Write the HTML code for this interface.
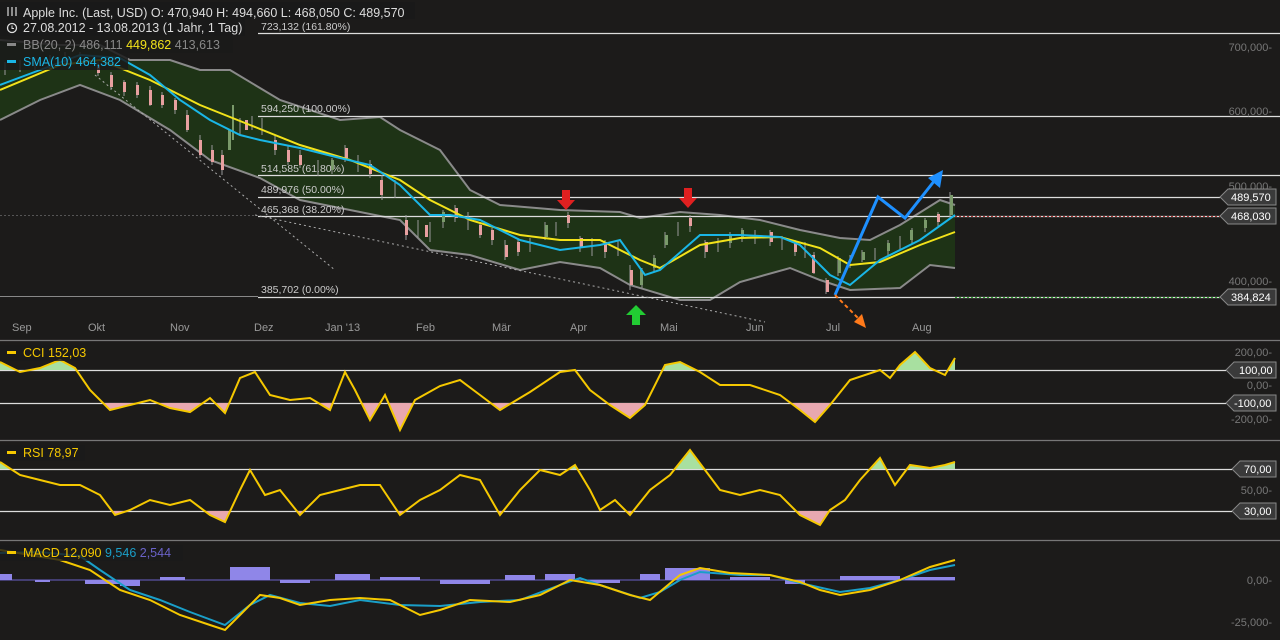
<!DOCTYPE html>
<html><head><meta charset="utf-8"><style>
html,body{margin:0;padding:0;background:#1c1b1a;width:1280px;height:640px;overflow:hidden}
svg{display:block;font-family:"Liberation Sans",sans-serif}
</style></head><body>
<svg width="1280" height="640" viewBox="0 0 1280 640">
<rect width="1280" height="640" fill="#1c1b1a"/>
<defs>
<clipPath id="cciU"><rect x="0" y="340" width="1280" height="30"/></clipPath>
<clipPath id="cciL"><rect x="0" y="403" width="1280" height="37"/></clipPath>
<clipPath id="rsiU"><rect x="0" y="440" width="1280" height="29"/></clipPath>
<clipPath id="rsiL"><rect x="0" y="511" width="1280" height="29"/></clipPath>
</defs>
<g stroke="#777" stroke-width="1.2"><line x1="0" y1="340.5" x2="1280" y2="340.5"/><line x1="0" y1="440.5" x2="1280" y2="440.5"/><line x1="0" y1="540.5" x2="1280" y2="540.5"/></g>
<polygon fill="#1e3316" points="0,40 60,45 100,45 130,60 170,60 200,70 230,70 280,100 340,120 380,117 400,130 440,150 470,190 500,205 560,210 620,212 640,218 680,212 720,215 760,220 800,230 840,238 870,240 900,225 940,200 955,205 955,268 930,265 900,288 850,290 820,280 790,268 740,282 710,300 680,300 630,285 600,268 560,262 520,270 470,255 430,250 400,220 350,210 300,200 260,178 210,160 170,130 120,100 80,85 40,100 0,120"/>
<g fill="none" stroke="#8a8a8a" stroke-width="2">
<polyline points="0,40 60,45 100,45 130,60 170,60 200,70 230,70 280,100 340,120 380,117 400,130 440,150 470,190 500,205 560,210 620,212 640,218 680,212 720,215 760,220 800,230 840,238 870,240 900,225 940,200 955,205"/>
<polyline points="0,120 40,100 80,85 120,100 170,130 210,160 260,178 300,200 350,210 400,220 430,250 470,255 520,270 560,262 600,268 630,285 680,300 710,300 740,282 790,268 820,280 850,290 900,288 930,265 955,268"/>
</g>
<g stroke="#ddd" stroke-width="1.2">
<line x1="258" y1="33.5" x2="1280" y2="33.5"/><line x1="258" y1="116.5" x2="1280" y2="116.5"/><line x1="258" y1="175.5" x2="1280" y2="175.5"/><line x1="258" y1="197.5" x2="1220" y2="197.5"/>
<line x1="258" y1="216.5" x2="1220" y2="216.5"/><line x1="258" y1="297.5" x2="1220" y2="297.5"/>
</g>
<line x1="0" y1="215.5" x2="258" y2="215.5" stroke="#555" stroke-dasharray="2,2"/>
<line x1="0" y1="296.5" x2="258" y2="296.5" stroke="#888"/>
<g font-size="10.5" fill="#ccc">
<text x="261" y="30">723,132 (161.80%)</text><text x="261" y="112">594,250 (100.00%)</text><text x="261" y="172">514,585 (61.80%)</text><text x="261" y="193">489,976 (50.00%)</text><text x="261" y="213">465,368 (38.20%)</text><text x="261" y="293">385,702 (0.00%)</text>
</g>
<g stroke="#aaa" stroke-dasharray="2,3" fill="none"><line x1="95" y1="75" x2="335" y2="270"/><line x1="255" y1="215" x2="765" y2="322"/></g>
<!-- candles -->
<g stroke="#999" stroke-width="1">
<path d="M5 62V75M20 60V72M35 58V70M50 55V68M65 52V66M80 52V64M98 62V76M111 72V90M124 80V96M137 82V98M150 86V106M162 92V108M175 98V114M187 110V132M200 135V158M212 145V165M222 150V175M240 118V136M252 116V130M262 118V135M275 135V155M288 145V165M300 150V168M318 160V176M332 158V174M345 145V162M358 155V172M370 160V178M382 175V200M395 180V198M406 215V240M418 220V238M430 222V242M443 210V228M455 205V222M468 212V230M480 222V238M492 228V245M505 240V260M518 238V256M530 238V252M545 222V240M556 222V236M568 212V228M580 236V252M592 238V256M605 240V258M618 240V256M630 265V290M642 268V288M654 255V272M665 232V248M678 222V236M690 215V232M705 240V258M718 238V252M730 232V248M742 228V242M755 230V244M770 230V246M782 236V250M795 240V256M805 242V258M814 252V274M826 278V294M838 256V276M850 255V268M862 250V262M875 248V260M888 240V255M900 236V250M912 228V244M925 218V232M938 212V226M950 192V218"/>
</g>
<g fill="#e8a0a0">
<rect x="97" y="65" width="3" height="8"/><rect x="110" y="75" width="3" height="12"/><rect x="123" y="82" width="3" height="10"/><rect x="136" y="85" width="3" height="10"/><rect x="149" y="90" width="3" height="15"/><rect x="161" y="95" width="3" height="10"/><rect x="174" y="100" width="3" height="10"/><rect x="186" y="115" width="3" height="15"/><rect x="199" y="140" width="3" height="15"/><rect x="211" y="150" width="3" height="12"/><rect x="221" y="155" width="3" height="15"/><rect x="245" y="120" width="3" height="10"/><rect x="274" y="140" width="3" height="10"/><rect x="287" y="150" width="3" height="12"/><rect x="299" y="155" width="3" height="10"/><rect x="345" y="148" width="3" height="10"/><rect x="369" y="164" width="3" height="10"/><rect x="380" y="180" width="3" height="15"/><rect x="405" y="220" width="3" height="15"/><rect x="425" y="225" width="3" height="12"/><rect x="455" y="208" width="3" height="10"/><rect x="479" y="225" width="3" height="10"/><rect x="491" y="230" width="3" height="10"/><rect x="505" y="245" width="3" height="12"/><rect x="517" y="242" width="3" height="10"/><rect x="567" y="215" width="3" height="8"/><rect x="580" y="238" width="3" height="10"/><rect x="604" y="242" width="3" height="10"/><rect x="630" y="270" width="3" height="15"/><rect x="689" y="218" width="3" height="8"/><rect x="705" y="242" width="3" height="10"/><rect x="770" y="232" width="3" height="10"/><rect x="794" y="242" width="3" height="10"/><rect x="812" y="255" width="3" height="18"/><rect x="826" y="280" width="3" height="12"/><rect x="937" y="214" width="3" height="8"/>
</g>
<g fill="#7a9a6a"><rect x="228" y="130" width="3" height="20"/><rect x="232" y="105" width="2" height="35"/><rect x="331" y="160" width="3" height="10"/><rect x="442" y="212" width="3" height="10"/><rect x="545" y="225" width="3" height="12"/><rect x="640" y="270" width="3" height="15"/><rect x="653" y="258" width="3" height="10"/><rect x="665" y="235" width="3" height="10"/><rect x="729" y="235" width="3" height="8"/><rect x="741" y="230" width="3" height="8"/><rect x="838" y="258" width="3" height="15"/><rect x="862" y="252" width="3" height="8"/><rect x="887" y="243" width="3" height="8"/><rect x="910" y="230" width="3" height="10"/><rect x="924" y="220" width="3" height="8"/><rect x="950" y="195" width="3" height="20"/></g>
<polyline fill="none" stroke="#f2e21a" stroke-width="2" points="0,90 60,65 100,60 150,80 200,105 250,125 300,145 350,160 400,180 430,200 470,220 520,235 560,240 600,240 640,260 660,268 700,245 740,238 780,237 820,248 850,265 880,262 920,245 955,232"/>
<polyline fill="none" stroke="#1ab6e6" stroke-width="2" points="0,85 40,70 80,55 120,58 150,75 180,100 210,120 240,135 260,140 300,148 340,158 370,165 400,185 430,215 450,215 480,220 520,240 560,250 600,245 620,240 645,275 660,270 700,235 740,235 780,237 800,245 830,275 850,285 880,260 920,240 955,215"/>
<polyline fill="none" stroke="#1e90ff" stroke-width="3" points="835,295 878,197 905,218 935,180"/>
<polygon fill="#1e90ff" points="943,170 928,178 940,188"/>
<line x1="835" y1="295" x2="860" y2="320" stroke="#ff7a1a" stroke-width="2" stroke-dasharray="4,3"/>
<polygon fill="#ff7a1a" points="866,328 854,322 862,314"/>
<g fill="#e02020"><polygon points="562,190 570,190 570,200 575,200 566,210 557,200 562,200"/><polygon points="684,188 692,188 692,198 697,198 688,208 679,198 684,198"/></g>
<polygon fill="#22cc33" points="636,305 646,315 640,315 640,325 632,325 632,315 626,315"/>
<g font-size="11" fill="#777" text-anchor="end">
<text x="1272" y="51">700,000-</text><text x="1272" y="115">600,000-</text><text x="1272" y="190">500,000-</text><text x="1272" y="285">400,000-</text>
<text x="1272" y="356">200,00-</text><text x="1272" y="389">0,00-</text><text x="1272" y="423">-200,00-</text>
<text x="1272" y="494">50,00-</text><text x="1272" y="584">0,00-</text><text x="1272" y="626">-25,000-</text>
</g>
<g font-size="11" fill="#fff">
<g fill="#3a3a3a" stroke="#888"><polygon points="1220,197 1228,189 1276,189 1276,205 1228,205"/><polygon points="1220,216 1228,208 1276,208 1276,224 1228,224"/><polygon points="1220,297 1228,289 1276,289 1276,305 1228,305"/>
<polygon points="1226,370 1234,362 1276,362 1276,378 1234,378"/><polygon points="1226,403 1234,395 1276,395 1276,411 1234,411"/><polygon points="1232,469 1240,461 1276,461 1276,477 1240,477"/><polygon points="1232,511 1240,503 1276,503 1276,519 1240,519"/></g>
<text x="1231" y="201">489,570</text><text x="1231" y="220">468,030</text><text x="1231" y="301">384,824</text><text x="1239" y="374">100,00</text><text x="1234" y="407">-100,00</text><text x="1244" y="473">70,00</text><text x="1244" y="515">30,00</text>
</g>
<line x1="955" y1="216.5" x2="1220" y2="216.5" stroke="#a33" stroke-dasharray="2,2"/>
<line x1="955" y1="297.5" x2="1220" y2="297.5" stroke="#3a3" stroke-dasharray="2,2"/>
<g font-size="11" fill="#999"><text x="12" y="331">Sep</text><text x="88" y="331">Okt</text><text x="170" y="331">Nov</text><text x="254" y="331">Dez</text><text x="325" y="331">Jan '13</text><text x="416" y="331">Feb</text><text x="492" y="331">Mär</text><text x="570" y="331">Apr</text><text x="660" y="331">Mai</text><text x="746" y="331">Jun</text><text x="826" y="331">Jul</text><text x="912" y="331">Aug</text></g>
<g stroke="#ddd" stroke-width="1.2"><line x1="0" y1="370.5" x2="1226" y2="370.5"/><line x1="0" y1="403.5" x2="1226" y2="403.5"/><line x1="0" y1="469.5" x2="1232" y2="469.5"/><line x1="0" y1="511.5" x2="1232" y2="511.5"/></g>
<polygon clip-path="url(#cciU)" fill="#a8e0a0" points="0,370 0,362 20,372 40,368 60,360 75,368 90,390 110,410 130,405 150,400 170,408 190,412 210,398 225,413 240,378 255,372 270,395 290,400 310,398 330,410 345,372 355,390 370,420 385,395 400,430 415,400 440,386 460,380 480,395 500,410 530,392 560,372 575,370 590,390 610,405 630,418 645,405 665,365 680,362 700,372 720,385 750,385 780,395 800,410 815,422 830,405 850,380 880,370 890,378 900,365 915,352 930,368 945,375 955,358 955,370"/>
<polygon clip-path="url(#cciL)" fill="#e8a8b0" points="0,403 0,362 20,372 40,368 60,360 75,368 90,390 110,410 130,405 150,400 170,408 190,412 210,398 225,413 240,378 255,372 270,395 290,400 310,398 330,410 345,372 355,390 370,420 385,395 400,430 415,400 440,386 460,380 480,395 500,410 530,392 560,372 575,370 590,390 610,405 630,418 645,405 665,365 680,362 700,372 720,385 750,385 780,395 800,410 815,422 830,405 850,380 880,370 890,378 900,365 915,352 930,368 945,375 955,358 955,403"/>
<polyline fill="none" stroke="#f5c800" stroke-width="2" points="0,362 20,372 40,368 60,360 75,368 90,390 110,410 130,405 150,400 170,408 190,412 210,398 225,413 240,378 255,372 270,395 290,400 310,398 330,410 345,372 355,390 370,420 385,395 400,430 415,400 440,386 460,380 480,395 500,410 530,392 560,372 575,370 590,390 610,405 630,418 645,405 665,365 680,362 700,372 720,385 750,385 780,395 800,410 815,422 830,405 850,380 880,370 890,378 900,365 915,352 930,368 945,375 955,358"/>
<polygon clip-path="url(#rsiU)" fill="#a8e0a0" points="0,469 0,462 20,475 40,480 60,485 80,485 100,495 115,515 130,510 150,500 170,505 190,500 210,515 225,522 240,490 250,470 265,495 280,490 300,515 320,495 340,490 360,485 380,485 400,515 420,500 440,490 460,475 480,480 500,515 520,490 540,470 560,475 575,465 590,490 600,510 615,500 630,515 650,490 670,475 690,450 705,470 720,490 740,495 760,490 780,495 800,515 820,525 830,510 845,500 860,480 880,458 895,485 910,465 930,468 945,465 955,462 955,469"/>
<polygon clip-path="url(#rsiL)" fill="#e8a8b0" points="0,511 0,462 20,475 40,480 60,485 80,485 100,495 115,515 130,510 150,500 170,505 190,500 210,515 225,522 240,490 250,470 265,495 280,490 300,515 320,495 340,490 360,485 380,485 400,515 420,500 440,490 460,475 480,480 500,515 520,490 540,470 560,475 575,465 590,490 600,510 615,500 630,515 650,490 670,475 690,450 705,470 720,490 740,495 760,490 780,495 800,515 820,525 830,510 845,500 860,480 880,458 895,485 910,465 930,468 945,465 955,462 955,511"/>
<polyline fill="none" stroke="#f5c800" stroke-width="2" points="0,462 20,475 40,480 60,485 80,485 100,495 115,515 130,510 150,500 170,505 190,500 210,515 225,522 240,490 250,470 265,495 280,490 300,515 320,495 340,490 360,485 380,485 400,515 420,500 440,490 460,475 480,480 500,515 520,490 540,470 560,475 575,465 590,490 600,510 615,500 630,515 650,490 670,475 690,450 705,470 720,490 740,495 760,490 780,495 800,515 820,525 830,510 845,500 860,480 880,458 895,485 910,465 930,468 945,465 955,462"/>
<line x1="0" y1="580" x2="955" y2="580" stroke="#6a62c8" stroke-width="1"/>
<g fill="#8f86e8">
<rect x="0" y="574" width="12" height="6"/><rect x="35" y="580" width="15" height="2"/><rect x="85" y="580" width="35" height="4"/><rect x="120" y="580" width="20" height="6"/><rect x="160" y="577" width="25" height="3"/><rect x="230" y="567" width="40" height="13"/><rect x="280" y="580" width="30" height="3"/><rect x="335" y="574" width="35" height="6"/><rect x="380" y="577" width="40" height="3"/><rect x="440" y="580" width="50" height="4"/><rect x="505" y="575" width="30" height="5"/><rect x="545" y="574" width="30" height="6"/><rect x="590" y="580" width="30" height="3"/><rect x="640" y="574" width="20" height="6"/><rect x="665" y="568" width="45" height="12"/><rect x="730" y="577" width="40" height="3"/><rect x="785" y="580" width="20" height="4"/><rect x="840" y="576" width="60" height="4"/><rect x="905" y="577" width="50" height="3"/>
</g>
<polyline fill="none" stroke="#1a9fc8" stroke-width="2" points="0,553 40,552 80,556 100,570 130,590 160,600 190,612 225,625 250,605 270,595 300,603 330,606 360,600 400,605 440,606 480,602 520,600 560,585 580,578 600,585 640,598 660,592 680,580 700,572 740,575 770,575 800,583 840,592 870,588 900,580 930,570 955,565"/>
<polyline fill="none" stroke="#f5c800" stroke-width="2" points="0,550 30,555 60,560 90,570 120,590 150,600 180,615 210,625 225,630 240,615 260,595 280,598 300,605 330,600 360,598 390,600 420,615 440,610 470,600 510,602 540,595 570,580 600,585 630,595 650,600 680,575 700,568 730,573 770,575 800,582 820,590 840,595 870,590 900,580 930,567 955,560"/>
<rect x="0" y="2" width="415" height="17" fill="#1a1a1a" opacity="0.9"/>
<rect x="0" y="19" width="245" height="17" fill="#1a1a1a" opacity="0.9"/>
<rect x="0" y="36" width="233" height="17" fill="#1a1a1a" opacity="0.85"/>
<rect x="0" y="53" width="128" height="17" fill="#1a1a1a" opacity="0.85"/>
<g font-size="12.5">
<g stroke="#ddd" stroke-width="1.2"><line x1="8" y1="7" x2="8" y2="16"/><line x1="12" y1="7" x2="12" y2="16"/><line x1="16" y1="7" x2="16" y2="16"/></g>
<text x="23" y="17" fill="#ddd">Apple Inc. (Last, USD)  O: 470,940  H: 494,660  L: 468,050  C: 489,570</text>
<circle cx="12" cy="28" r="4.5" fill="none" stroke="#ddd" stroke-width="1.3"/><path d="M12 25.5V28.5H14" stroke="#ddd" fill="none"/>
<text x="23" y="32" fill="#ddd">27.08.2012 - 13.08.2013 (1 Jahr, 1 Tag)</text>
<rect x="7" y="43" width="9" height="3" fill="#888"/><text x="23" y="49" fill="#888">BB(20, 2) 486,111 <tspan fill="#f2e21a">449,862</tspan> 413,613</text>
<rect x="7" y="60" width="9" height="3" fill="#1ab6e6"/><text x="23" y="66" fill="#1ab6e6">SMA(10) 464,382</text>
<rect x="0" y="345" width="80" height="16" fill="#1a1a1a" opacity="0.8"/>
<rect x="7" y="351" width="9" height="3" fill="#f5c800"/><text x="23" y="357" fill="#f5c800">CCI  152,03</text>
<rect x="0" y="445" width="85" height="16" fill="#1a1a1a" opacity="0.8"/>
<rect x="7" y="451" width="9" height="3" fill="#f5c800"/><text x="23" y="457" fill="#f5c800">RSI  78,97</text>
<rect x="0" y="545" width="183" height="16" fill="#1a1a1a" opacity="0.8"/>
<rect x="7" y="551" width="9" height="3" fill="#f5c800"/><text x="23" y="557" fill="#f5c800">MACD  12,090 <tspan fill="#1a9fc8">9,546</tspan> <tspan fill="#6a62c8">2,544</tspan></text>
</g>
</svg>
</body></html>
